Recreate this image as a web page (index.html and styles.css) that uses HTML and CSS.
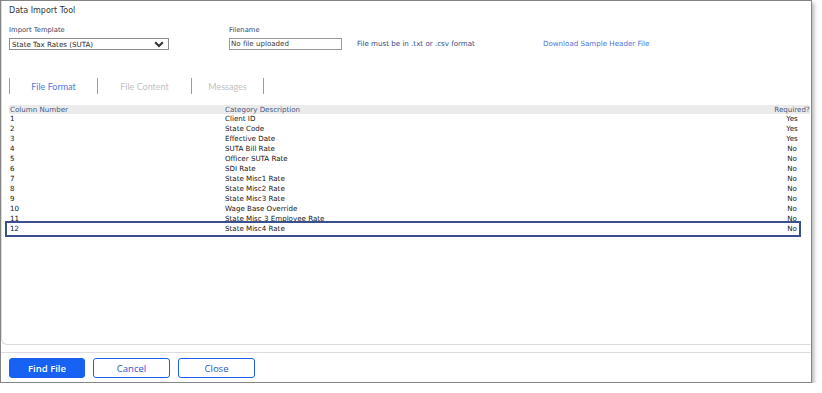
FILE: index.html
```html
<!DOCTYPE html>
<html lang="en">
<head>
<meta charset="UTF-8">
<title>Data Import Tool</title>
<link rel="stylesheet" href="styles.css">
</head>
<body>

<div class="window">
  <div class="panel">
    <div class="title">Data Import Tool</div>

    <div class="form-row">
      <div class="field">
        <label for="template">Import Template</label>
        <div class="select" id="template">
          <span>State Tax Rates (SUTA)</span>
          <svg width="10" height="7" viewBox="0 0 10 7"><path d="M1.2 1.2 L5 5 L8.8 1.2" fill="none" stroke="#333" stroke-width="2"/></svg>
        </div>
      </div>
      <div class="field">
        <label for="filename">Filename</label>
        <div class="input" id="filename">No file uploaded</div>
      </div>
      <div class="note">File must be in .txt or .csv format</div>
      <div class="link">Download Sample Header File</div>
    </div>

    <div class="tabs">
      <div class="tab active">File Format</div>
      <div class="tab">File Content</div>
      <div class="tab">Messages</div>
    </div>

    <div class="grid">
      <div class="row head"><span>Column Number</span><span>Category Description</span><span>Required?</span></div>
      <div class="row"><span>1</span><span>Client ID</span><span>Yes</span></div>
      <div class="row"><span>2</span><span>State Code</span><span>Yes</span></div>
      <div class="row"><span>3</span><span>Effective Date</span><span>Yes</span></div>
      <div class="row"><span>4</span><span>SUTA Bill Rate</span><span>No</span></div>
      <div class="row"><span>5</span><span>Officer SUTA Rate</span><span>No</span></div>
      <div class="row"><span>6</span><span>SDI Rate</span><span>No</span></div>
      <div class="row"><span>7</span><span>State Misc1 Rate</span><span>No</span></div>
      <div class="row"><span>8</span><span>State Misc2 Rate</span><span>No</span></div>
      <div class="row"><span>9</span><span>State Misc3 Rate</span><span>No</span></div>
      <div class="row"><span>10</span><span>Wage Base Override</span><span>No</span></div>
      <div class="row"><span>11</span><span>State Misc 3 Employee Rate</span><span>No</span></div>
      <div class="row selected"><span>12</span><span>State Misc4 Rate</span><span>No</span></div>
    </div>
  </div>

  <div class="footer">
    <button type="button" class="btn primary">Find File</button>
    <button type="button" class="btn">Cancel</button>
    <button type="button" class="btn">Close</button>
  </div>
</div>

</body>
</html>
```

FILE: styles.css
```css
body {
  margin: 0;
  background: #fff;
  font-family: "DejaVu Sans", Verdana, sans-serif;
}

.window {
  width: 812px;
  height: 383px;
  box-sizing: border-box;
  border: 1px solid #858585;
  background: #fff;
  box-shadow: 2px 3px 4px rgba(0,0,0,0.3);
  display: flex;
  flex-direction: column;
}

.panel {
  height: 344px;
  box-sizing: border-box;
  border-left: 1px solid #dcdcdc;
  border-bottom: 1px solid #dcdcdc;
  border-bottom-left-radius: 6px;
  padding: 4px 0 0 7px;
}

.title {
  font-size: 8px;
  line-height: 12px;
  color: #333;
}

.form-row {
  display: grid;
  grid-template-columns: 220px 128px 186px 1fr;
  margin-top: 8px;
}

.field label {
  display: block;
  font-size: 6.8px;
  line-height: 10px;
  color: #3a4668;
  margin-bottom: 3px;
}

.select {
  width: 160px;
  height: 12px;
  box-sizing: border-box;
  border: 1px solid #8c8c8c;
  display: flex;
  align-items: center;
  justify-content: space-between;
  padding: 0 4px 0 2px;
  font-size: 7.1px;
  color: #2a2a2a;
}

.input {
  width: 113px;
  height: 12px;
  box-sizing: border-box;
  border: 1px solid #9a9a9a;
  font-size: 7.1px;
  line-height: 10px;
  padding-left: 1px;
  color: #3a3a3a;
}

.note, .link {
  align-self: end;
  font-size: 7.1px;
  line-height: 12px;
}

.note { color: #2f4a86; }
.link { color: #4a74d6; }

.tabs {
  display: flex;
  margin-top: 28px;
  height: 16px;
}

.tab {
  border-left: 1px solid #9c9c9c;
  font-family: Lato, "Open Sans", sans-serif;
  font-size: 9px;
  line-height: 17px;
  text-align: center;
  color: #c2c2c2;
}

.tab:nth-child(1) { width: 87px; }
.tab:nth-child(2) { width: 93px; }
.tab:nth-child(3) { width: 71px; border-right: 1px solid #9c9c9c; }
.tab.active { color: #5378d8; }

.grid {
  margin-top: 11px;
  width: 801px;
  font-size: 7.1px;
}

.row {
  display: grid;
  grid-template-columns: 216px 1fr 36px;
  height: 10px;
  line-height: 10px;
  color: #151515;
  white-space: nowrap;
}

.row span { overflow: hidden; }
.row span:first-child { padding-left: 1px; }
.row span:last-child { text-align: center; }

.row.head {
  height: 9px;
  line-height: 9px;
  background: #ebebeb;
  color: #475884;
}

.row.selected { position: relative; }
.row.selected::after {
  content: "";
  position: absolute;
  left: -4px;
  right: 9px;
  top: -3px;
  bottom: -3px;
  border: 2px solid #3b4f8e;
}

.footer {
  margin-top: 7px;
  border-top: 1px solid #dcdcdc;
  padding: 5px 0 0 8px;
  display: flex;
  gap: 8px;
}

.btn {
  width: 77px;
  height: 20px;
  box-sizing: border-box;
  border: 1px solid #1c5ff0;
  border-radius: 3px;
  background: #fff;
  color: #2a55c9;
  font-family: "Open Sans", "Noto Sans", sans-serif;
  font-size: 9.5px;
  padding: 0;
  cursor: pointer;
}

.btn.primary {
  width: 76px;
  background: #1761f3;
  color: #fff;
  font-weight: 600;
}
```
